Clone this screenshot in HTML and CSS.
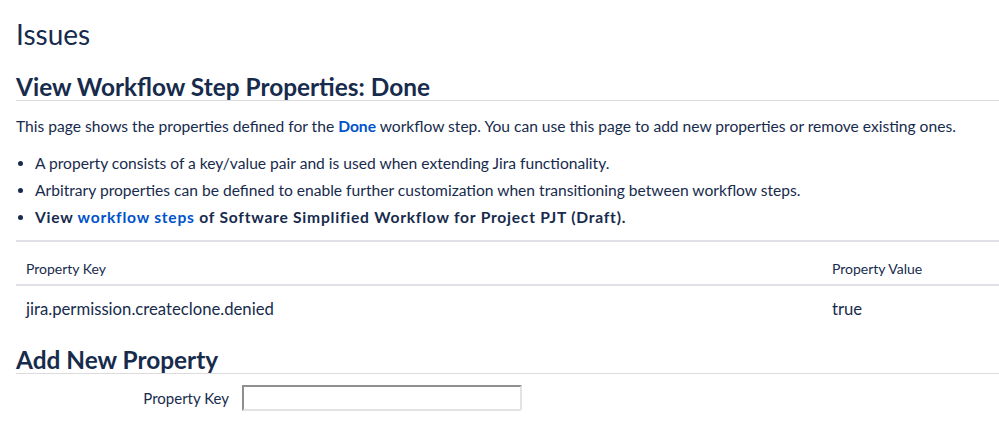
FILE: index.html
```html
<!DOCTYPE html>
<html>
<head>
<meta charset="utf-8">
<link rel="stylesheet" href="styles.css">
</head>
<body>
<main class="page">
  <h1 class="page-title">Issues</h1>
  <h2 class="section-title">View Workflow Step Properties: Done</h2>
  <p class="intro">This page shows the properties defined for the <a class="link" href="#">Done</a> workflow step. You can use this page to add new properties or remove existing ones.</p>
  <ul class="notes">
    <li>A property consists of a key/value pair and is used when extending Jira functionality.</li>
    <li>Arbitrary properties can be defined to enable further customization when transitioning between workflow steps.</li>
    <li class="strong">View <a class="link" href="#">workflow steps</a> of Software Simplified Workflow for Project PJT (Draft).</li>
  </ul>
  <table class="props">
    <thead>
      <tr><th class="col-key">Property Key</th><th class="col-val">Property Value</th></tr>
    </thead>
    <tbody>
      <tr><td>jira.permission.createclone.denied</td><td>true</td></tr>
    </tbody>
  </table>
  <h2 class="section-title add-title">Add New Property</h2>
  <form class="add-form">
    <label class="field-label" for="pkey">Property Key</label>
    <input class="field-input" id="pkey" type="text">
  </form>
</main>
</body>
</html>
```

FILE: styles.css
```css
html, body {
  margin: 0;
  padding: 0;
  background: #fff;
}
body {
  font-family: Lato, "Open Sans", sans-serif;
  color: #172b4d;
  font-size: 15.6px;
  overflow: hidden;
}
.page {
  padding: 0 0 0 16px;
}
.page-title {
  font-size: 28px;
  font-weight: 400;
  line-height: 32px;
  margin: 18px 0 0;
  color: #172b4d;
}
.section-title {
  font-size: 24.4px;
  font-weight: 700;
  line-height: 24px;
  margin: 0;
  padding-top: 25px;
  padding-bottom: 1px;
  border-bottom: 1px solid #dcdcdc;
  color: #172b4d;
}
.intro {
  margin: 0;
  padding-top: 13px;
  line-height: 24px;
}
.link {
  color: #0052cc;
  font-weight: 700;
  text-decoration: none;
}
.notes {
  margin: 12px 0 0;
  padding-left: 19px;
  line-height: 27px;
}
.notes .strong {
  font-weight: 700;
  letter-spacing: 0.77px;
}
.props {
  width: 100%;
  border-collapse: collapse;
  margin-top: 9px;
  border-top: 2px solid #dfe1e6;
}
.props th {
  font-size: 14px;
  font-weight: 400;
  text-align: left;
  padding: 18px 10px 7px;
  border-bottom: 2px solid #dfe1e6;
}
.props td {
  padding: 11px 10px 7px;
  line-height: 24px;
  font-size: 16.7px;
}
.col-key {
  width: 786px;
}
.add-title {
  padding-top: 20px;
}
.add-form {
  display: flex;
  align-items: center;
  margin-top: 11px;
}
.field-label {
  width: 213px;
  text-align: right;
  font-size: 15px;
  padding-right: 13px;
}
.field-input {
  width: 276px;
  height: 22px;
  box-sizing: content-box;
  padding: 0;
  border-style: solid;
  border-width: 2px;
  border-color: #8f8f8f #e3e3e3 #e3e3e3 #8f8f8f;
  border-radius: 0 0 3px 0;
  font-size: 14px;
}
```
